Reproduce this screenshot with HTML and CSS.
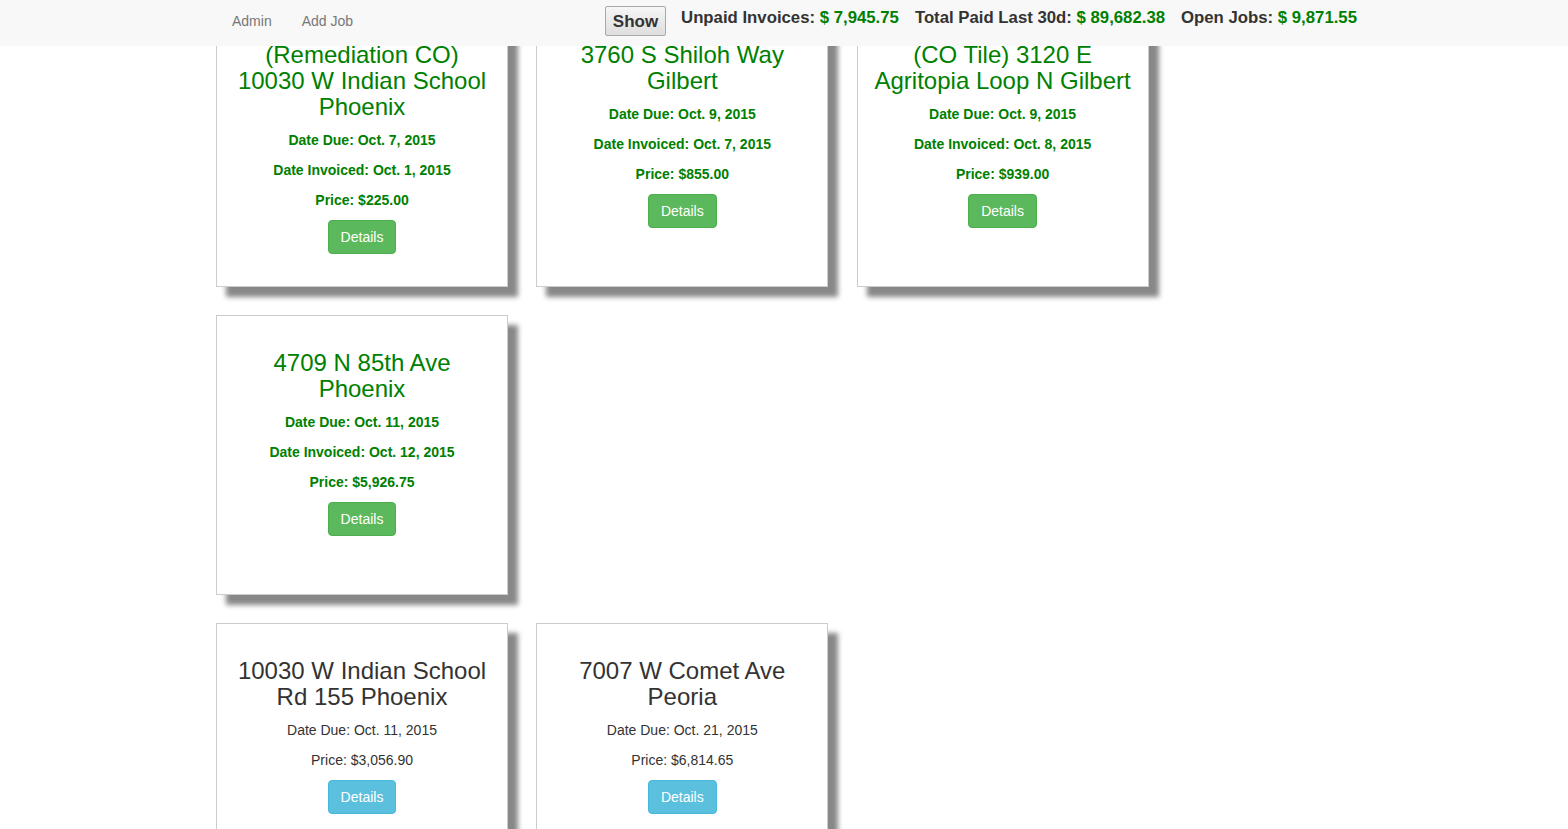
FILE: index.html
```html
<!DOCTYPE html>
<html>
<head>
<meta charset="utf-8">
<title>Jobs</title>
<link rel="stylesheet" href="styles.css">
</head>
<body>
<nav class="navbar">
  <ul class="nav-links">
    <li><a href="#">Admin</a></li>
    <li><a href="#">Add Job</a></li>
  </ul>
  <div class="nav-right">
    <button class="show-btn" type="button">Show</button>
    <div class="stats">
      <span class="stat">Unpaid Invoices: <span class="money">$ 7,945.75</span></span>
      <span class="stat">Total Paid Last 30d: <span class="money">$ 89,682.38</span></span>
      <span class="stat">Open Jobs: <span class="money">$ 9,871.55</span></span>
    </div>
  </div>
</nav>

<main class="page">
  <section class="grid">
    <div class="card invoiced">
      <h3>(Remediation CO) 10030 W Indian School Phoenix</h3>
      <p>Date Due: Oct. 7, 2015</p>
      <p>Date Invoiced: Oct. 1, 2015</p>
      <p>Price: $225.00</p>
      <a class="btn btn-success" href="#">Details</a>
    </div>
    <div class="card invoiced">
      <h3>3760 S Shiloh Way Gilbert</h3>
      <p>Date Due: Oct. 9, 2015</p>
      <p>Date Invoiced: Oct. 7, 2015</p>
      <p>Price: $855.00</p>
      <a class="btn btn-success" href="#">Details</a>
    </div>
    <div class="card invoiced">
      <h3>(CO Tile) 3120 E Agritopia Loop N Gilbert</h3>
      <p>Date Due: Oct. 9, 2015</p>
      <p>Date Invoiced: Oct. 8, 2015</p>
      <p>Price: $939.00</p>
      <a class="btn btn-success" href="#">Details</a>
    </div>
    <div class="card invoiced">
      <h3>4709 N 85th Ave Phoenix</h3>
      <p>Date Due: Oct. 11, 2015</p>
      <p>Date Invoiced: Oct. 12, 2015</p>
      <p>Price: $5,926.75</p>
      <a class="btn btn-success" href="#">Details</a>
    </div>
  </section>
  <section class="grid">
    <div class="card">
      <h3>10030 W Indian School Rd 155 Phoenix</h3>
      <p>Date Due: Oct. 11, 2015</p>
      <p>Price: $3,056.90</p>
      <a class="btn btn-info" href="#">Details</a>
    </div>
    <div class="card">
      <h3>7007 W Comet Ave Peoria</h3>
      <p>Date Due: Oct. 21, 2015</p>
      <p>Price: $6,814.65</p>
      <a class="btn btn-info" href="#">Details</a>
    </div>
  </section>
</main>
</body>
</html>
```

FILE: styles.css
```css
html, body {
  margin: 0;
  padding: 0;
  background: #fff;
  overflow: hidden;
}
body {
  font-family: "Liberation Sans", Arial, Helvetica, sans-serif;
  font-size: 14px;
  line-height: 20px;
  color: #333;
}

.navbar {
  position: fixed;
  top: 0;
  left: 0;
  right: 0;
  height: 46px;
  background: #f8f8f8;
  z-index: 10;
  display: flex;
  justify-content: space-between;
  align-items: flex-start;
  padding: 0 211px 0 217px;
}
.nav-links {
  list-style: none;
  margin: 0;
  padding: 0;
  display: flex;
}
.nav-links a {
  display: block;
  padding: 11px 15px;
  line-height: 20px;
  color: #777;
  text-decoration: none;
}
.nav-right {
  display: flex;
  align-items: flex-start;
}
.show-btn {
  margin-top: 6px;
  width: 61px;
  height: 30px;
  padding: 2px 0 0;
  font-family: "Liberation Sans", Arial, sans-serif;
  font-size: 17px;
  font-weight: bold;
  color: #333;
  border: 1px solid #a9a9a9;
  border-radius: 2px;
  background: linear-gradient(#f6f6f6, #dedede);
}
.stats {
  display: flex;
  margin-left: 15px;
  margin-top: 8px;
  font-size: 16.75px;
  font-weight: bold;
  line-height: 20px;
  color: #333;
}
.stat + .stat {
  margin-left: 16px;
}
.money {
  color: #008000;
}

.page {
  padding: 7px 0 0 216px;
}
.grid {
  display: grid;
  grid-template-columns: repeat(3, 292px);
  column-gap: 28.3px;
  row-gap: 28px;
  margin-bottom: 28px;
}
.card {
  box-sizing: border-box;
  height: 280px;
  border: 1px solid #ccc;
  background: #fff;
  box-shadow: 10px 10px 5px #888888;
  padding: 14px 15px 0;
  text-align: center;
}
.card h3 {
  margin: 20px 0 10px;
  font-size: 24px;
  line-height: 26px;
  font-weight: normal;
}
.card p {
  margin: 0 0 10px;
}
.card.invoiced h3,
.card.invoiced p {
  color: #008000;
}
.card.invoiced p {
  font-weight: bold;
}
.btn {
  display: inline-block;
  box-sizing: border-box;
  height: 34px;
  padding: 6px 12px;
  font-size: 14px;
  line-height: 20px;
  color: #fff;
  text-decoration: none;
  border: 1px solid transparent;
  border-radius: 4px;
}
.btn-success {
  background: #5cb85c;
  border-color: #4cae4c;
}
.btn-info {
  background: #5bc0de;
  border-color: #46b8da;
}
```
